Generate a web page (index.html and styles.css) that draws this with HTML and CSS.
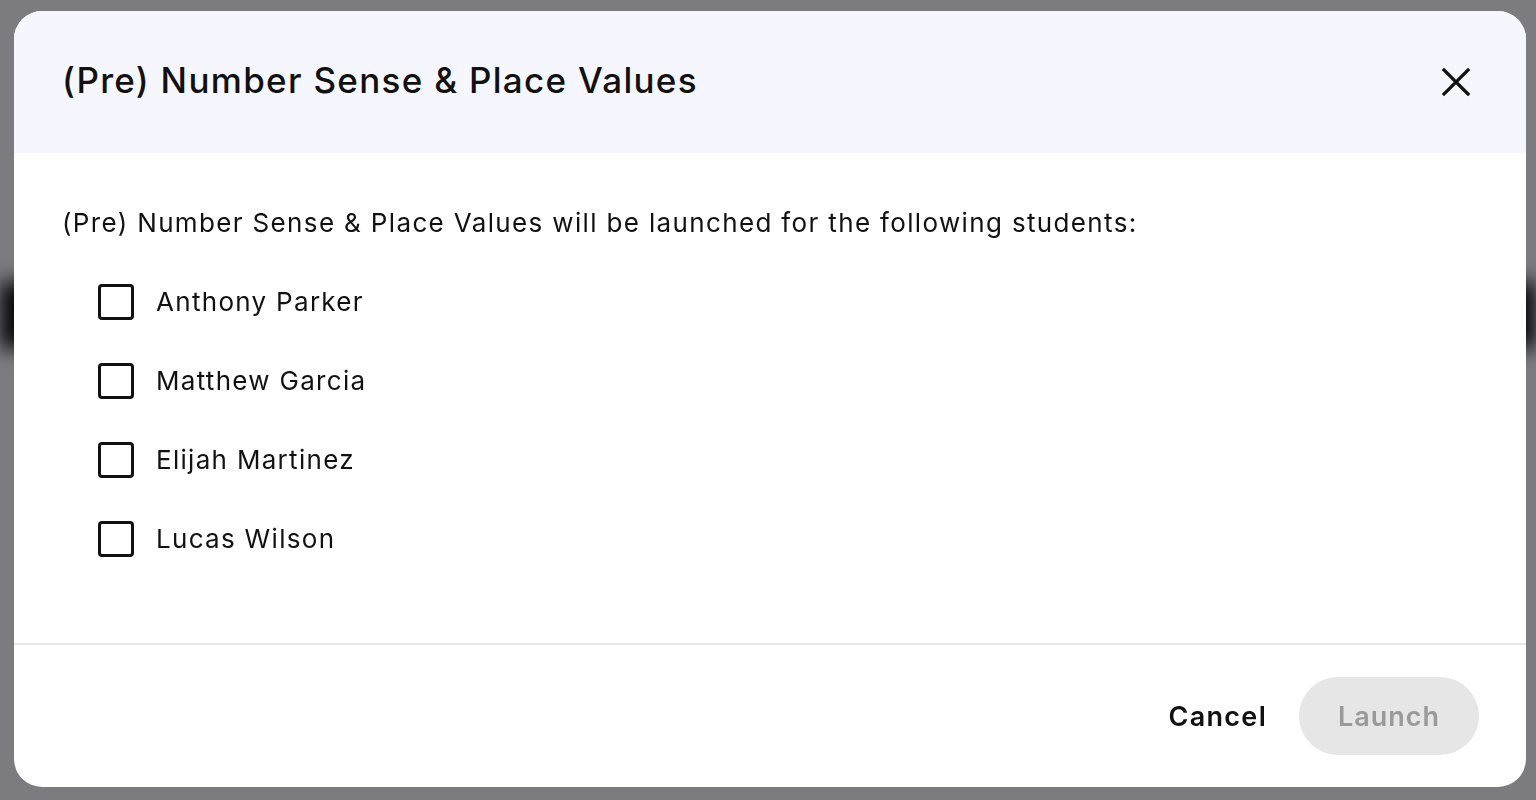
FILE: index.html
```html
<!DOCTYPE html>
<html lang="en">
<head>
  <meta charset="UTF-8">
  <meta name="viewport" content="width=device-width, initial-scale=1.0">
  <title>Launch assessment</title>
  <link rel="stylesheet" href="styles.css">
</head>
<body>
  <!-- dimmed page behind the dialog -->
  <div class="backdrop">
    <div class="backdrop-band"></div>
  </div>

  <div class="modal">
    <div class="modal-header">
      <h2 class="modal-title">(Pre) Number Sense &amp; Place Values</h2>
      <button class="close-btn" aria-label="Close">
        <svg width="32" height="32" viewBox="0 0 32 32" fill="none" stroke="#111" stroke-width="3.2" stroke-linecap="square">
          <path d="M4 4 L28 28 M28 4 L4 28"/>
        </svg>
      </button>
    </div>

    <div class="modal-body">
      <p class="intro">(Pre) Number Sense &amp; Place Values will be launched for the following students:</p>
      <ul class="student-list">
        <li><label><span class="checkbox"></span>Anthony Parker</label></li>
        <li><label><span class="checkbox"></span>Matthew Garcia</label></li>
        <li><label><span class="checkbox"></span>Elijah Martinez</label></li>
        <li><label><span class="checkbox"></span>Lucas Wilson</label></li>
      </ul>
    </div>

    <div class="modal-footer">
      <button class="btn-cancel">Cancel</button>
      <button class="btn-launch" disabled>Launch</button>
    </div>
  </div>
</body>
</html>
```

FILE: styles.css
```css
* {
  box-sizing: border-box;
}
body {
  margin: 0;
  height: 800px;
  overflow: hidden;
  font-family: Inter, "Noto Sans", sans-serif;
  color: #111;
  background: #7b7b80;
  padding: 11px 10px 13px 14px;
}
/* 背景遮罩 */
.backdrop {
  position: fixed;
  inset: 0;
  background: #7b7b80;
  z-index: 0;
}
.backdrop-band {
  position: absolute;
  left: 0;
  right: 0;
  top: 282px;
  height: 66px;
  background: #050505;
  filter: blur(10px);
}
/* 弹窗 */
.modal {
  position: relative;
  z-index: 1;
  width: 1512px;
  height: 776px;
  background: #fff;
  border-radius: 28px;
  overflow: hidden;
  display: flex;
  flex-direction: column;
}
.modal-header {
  height: 142px;
  background: #f6f6fe;
  display: flex;
  align-items: center;
  justify-content: space-between;
  padding: 0 54px 0 48px;
}
.modal-title {
  margin: 0 0 4px;
  font-size: 35px;
  font-weight: 500;
  letter-spacing: 1.3px;
}
.close-btn {
  background: none;
  border: none;
  padding: 0;
  width: 32px;
  height: 32px;
  cursor: pointer;
}
.modal-body {
  flex: 1;
  padding: 50px 48px 0;
  border-bottom: 2px solid #e6e6e6;
}
.intro {
  margin: 0 0 39px;
  font-size: 26px;
  line-height: 40px;
  letter-spacing: 1.35px;
}
.student-list {
  list-style: none;
  margin: 0;
  padding: 0 0 0 36px;
  display: flex;
  flex-direction: column;
  gap: 39px;
}
.student-list label {
  display: flex;
  align-items: center;
  gap: 22px;
  font-size: 26px;
  line-height: 40px;
  letter-spacing: 1.3px;
  cursor: pointer;
}
.checkbox {
  width: 36px;
  height: 36px;
  border: 3.5px solid #111;
  border-radius: 4px;
}
.modal-footer {
  height: 142px;
  display: flex;
  align-items: center;
  justify-content: flex-end;
  gap: 32px;
  padding: 0 47px 0 0;
}
.btn-cancel {
  background: none;
  border: none;
  padding: 0;
  font-family: inherit;
  font-size: 27px;
  font-weight: 600;
  letter-spacing: 1.3px;
  color: #111;
  cursor: pointer;
}
.btn-launch {
  width: 180px;
  height: 78px;
  border: none;
  border-radius: 39px;
  background: #e6e6e6;
  color: #9a9a9a;
  font-family: inherit;
  font-size: 27px;
  font-weight: 600;
  letter-spacing: 1px;
}
```
